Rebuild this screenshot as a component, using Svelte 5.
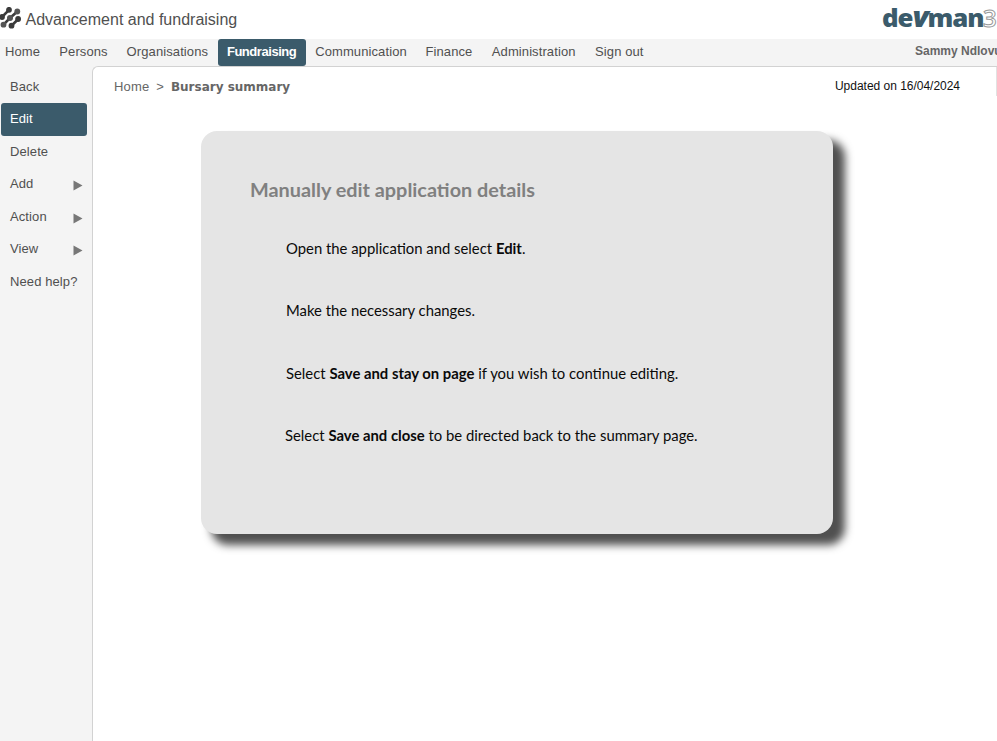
<script>
  const nav = [
    { label: 'Home', w: 36 }, { label: 'Persons', w: 49 }, { label: 'Organisations', w: 82 },
    { label: 'Fundraising', w: 70, active: true }, { label: 'Communication', w: 92 },
    { label: 'Finance', w: 48 }, { label: 'Administration', w: 85 }, { label: 'Sign out', w: 50 }
  ];
  const side = [
    { label: 'Back' }, { label: 'Edit', active: true }, { label: 'Delete' },
    { label: 'Add', more: true }, { label: 'Action', more: true }, { label: 'View', more: true },
    { label: 'Need help?' }
  ];
</script>

<div class="app">
  <header>
    <svg class="mark" width="21" height="22" viewBox="0 0 21 22" fill="#3a3a3a" stroke="#3a3a3a">
      <path d="M9 2.800 2 10M17.300 4.500 10 11 3.500 17.700M18.300 12 11.500 18.700" fill="none" stroke-width="2.600" />
      <g stroke="none">
        <circle cx="9" cy="2.800" r="2.900" /><circle cx="2" cy="10" r="2.900" />
        <circle cx="17.300" cy="4.500" r="2.900" fill="#555" /><circle cx="10" cy="11" r="3" fill="#555" /><circle cx="3.500" cy="17.700" r="2.900" fill="#555" />
        <circle cx="18.100" cy="12" r="2.900" /><circle cx="11.500" cy="18.700" r="2.900" />
      </g>
    </svg>
    <h1>Advancement and fundraising</h1>
    <div class="logo"><span>de<i>v</i>man</span><b>3</b></div>
  </header>
  <nav>
    {#each nav as n}
      <a class:active={n.active}><span style="width:{n.w}px">{n.label}</span></a>
    {/each}
    <div class="user">Sammy Ndlovu</div>
  </nav>
  <div class="body">
    <aside>
      {#each side as s}
        <a class:active={s.active}>{s.label}{#if s.more}<svg width="10" height="11" viewBox="0 0 10 11"><path d="M0.500 0.500 9.500 5.500 0.500 10.500Z" fill="#777" /></svg>{/if}</a>
      {/each}
    </aside>
    <main>
      <div class="crumbs">
        <span class="home">Home</span><span class="sep">&gt;</span><strong>Bursary summary</strong>
        <span class="date">Updated on 16/04/2024</span>
      </div>
      <section>
        <h2>Manually edit application details</h2>
        <p class="p1">Open the application and select <b>Edit</b>.</p>
        <p class="p2">Make the necessary changes.</p>
        <p class="p3">Select <b>Save and stay on page</b> if you wish to continue editing.</p>
        <p class="p4">Select <b>Save and close</b> to be directed back to the summary page.</p>
      </section>
    </main>
  </div>
</div>

<style>
  :global(body) { margin: 0; overflow: hidden; }
  .app { width: 997px; height: 741px; overflow: hidden; background: #f4f4f4; font: 13px/16px "Liberation Sans", Arial, sans-serif; color: #505050; display: flex; flex-direction: column; white-space: nowrap; box-sizing: border-box; }
  header { height: 39px; background: #fff; display: flex; align-items: flex-start; flex: none; }
  .mark { margin: 7px 4.500px 0 0; flex: none; }
  h1 { font-size: 16px; font-weight: 400; line-height: 20px; margin: 10px 0 0; color: #505050; }
  .logo { margin: 4px 0 0 auto; display: flex; width: 115px; font: 800 24px/28px "Open Sans", sans-serif; color: #3b5b6b; letter-spacing: -1px; }
  .logo span { width: 101px; transform: scaleX(1.075); transform-origin: 0 0; flex: none; }
  .logo i { font-size: 28px; line-height: 24px; font-style: italic; letter-spacing: -1.200px; }
  .logo b { font-weight: 600; color: #fff; -webkit-text-stroke: 1px #999; }
  nav { height: 27px; display: flex; flex: none; }
  nav a { padding: 5px 9px 0; margin-left: .3px; letter-spacing: .1px; border-radius: 3px; height: 22px; }
  nav a:first-child { padding-left: 5px; margin-left: 0; }
  nav a span { display: block; }
  .active { background: #3b5b6b; color: #fff; }
  nav .active { font-weight: bold; letter-spacing: -.45px; }
  .user { margin-left: auto; width: 82px; padding-top: 4px; font-weight: bold; font-size: 12px; letter-spacing: 0; color: #666; }
  .body { flex: 1; display: flex; min-height: 0; }
  aside { width: 92px; padding-top: 4.500px; flex: none; box-sizing: border-box; }
  aside a { display: flex; height: 32.500px; width: 86px; margin-left: 1px; padding: 8px 4px 0 9px; box-sizing: border-box; border-radius: 3px; letter-spacing: .1px; }
  aside svg { margin: 4px 0 0 auto; }
  main { flex: 1; min-width: 0; background: #fff; border: solid #d2d2d2; border-width: 1px 0 0 1px; border-top-left-radius: 6px; }
  .crumbs { display: flex; height: 29px; margin-bottom: 34.500px; padding: 12px 36px 0 21px; box-sizing: border-box; color: #666; border-right: 1px solid #e2e2e2; }
  .home { letter-spacing: .15px; }
  .sep { margin: 0 7px; }
  strong { font: bold 12px/16px "DejaVu Sans", sans-serif; }
  .date { margin: -1px 0 0 auto; color: #111; font-size: 12px; letter-spacing: -.02px; }
  section { margin-left: 107.500px; width: 632px; height: 403px; box-sizing: border-box; border-radius: 16px; background: #e5e5e5; box-shadow: 11px 10px 9px 1px #505050; padding: 44.500px 0 0 49.500px; font: 14.850px/20px Lato, sans-serif; color: #0a0a0a; }
  h2 { margin: 0; font-size: 19.850px; line-height: 28px; color: #808080; }
  p { margin: 0 0 42.500px 36px; }
  .p1 { margin-top: 34.700px; }
  .p4 { margin-left: 35px; }
</style>
